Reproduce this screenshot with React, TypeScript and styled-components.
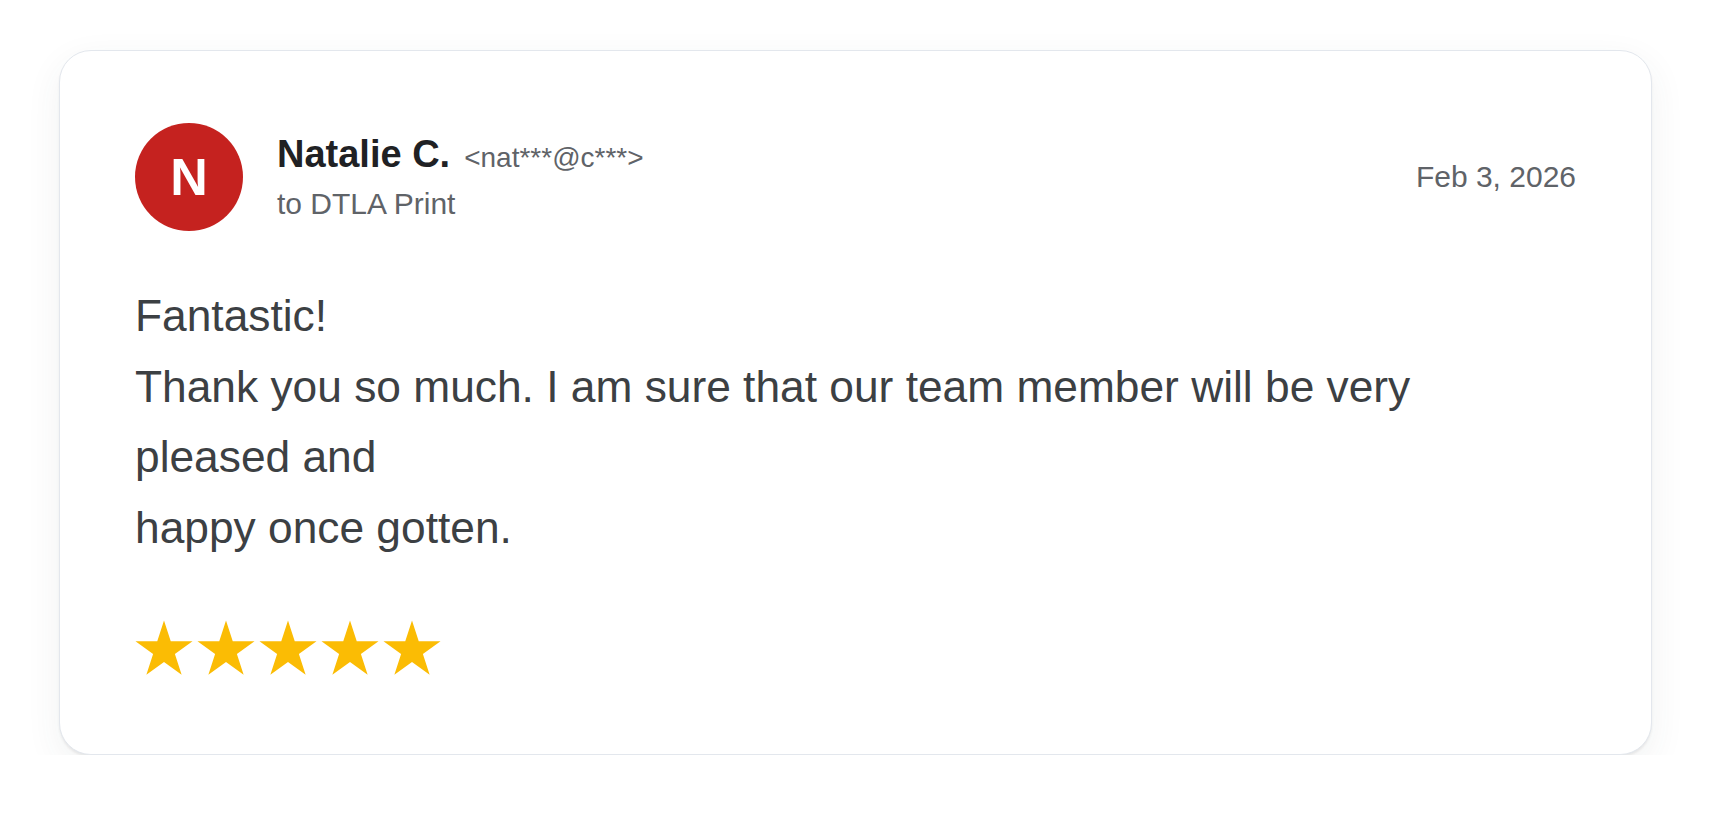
import React from "react";
import styled, { createGlobalStyle } from "styled-components";

const GlobalStyle = createGlobalStyle`
  html, body {
    margin: 0;
    padding: 0;
    background: #ffffff;
  }
  body {
    font-family: "Liberation Sans", Arial, Helvetica, sans-serif;
    -webkit-font-smoothing: antialiased;
  }
  * { box-sizing: border-box; }
`;

const Page = styled.div`
  padding: 50px 58px 0 59px;
`;

const Card = styled.article`
  background: #ffffff;
  border: 1px solid #e3e7ed;
  border-radius: 32px;
  padding: 72px 75px 78px 75px;
  box-shadow: 0 2px 2px rgba(60, 64, 67, 0.08), 0 12px 36px rgba(60, 64, 67, 0.07);
`;

const Header = styled.header`
  display: flex;
  align-items: center;
`;

const Avatar = styled.div<{ $bg: string }>`
  flex: none;
  width: 108px;
  height: 108px;
  border-radius: 50%;
  background: ${(p) => p.$bg};
  color: #ffffff;
  display: flex;
  align-items: center;
  justify-content: center;
  font-size: 52px;
  font-weight: 700;
  line-height: 1;
`;

const SenderBlock = styled.div`
  display: flex;
  flex-direction: column;
  margin-left: 34px;
`;

const NameLine = styled.div`
  display: flex;
  align-items: baseline;
  gap: 14px;
  line-height: 48px;
`;

const Name = styled.span`
  font-size: 38px;
  font-weight: 700;
  color: #202124;
`;

const Email = styled.span`
  font-size: 28px;
  color: #5f6368;
`;

const Recipient = styled.div`
  margin-top: 2px;
  font-size: 30px;
  line-height: 40px;
  color: #5f6368;
`;

const DateText = styled.time`
  margin-left: auto;
  font-size: 30px;
  line-height: 40px;
  color: #5f6368;
`;

const Body = styled.div`
  margin-top: 50px;
  font-size: 44.3px;
  line-height: 70.6px;
  color: #3c4043;
`;

const Stars = styled.div`
  display: flex;
  gap: 4px;
  margin-top: 57px;
`;

const StarSvg = styled.svg`
  display: block;
  width: 58px;
  height: 56px;
  fill: #fbbc04;
`;

const Star = () => (
  <StarSvg viewBox="0 0 58 56" aria-hidden="true">
    <polygon points="29,0.5 35.74,21.23 57.53,21.23 39.9,34.04 46.63,54.77 29,41.96 11.37,54.77 18.1,34.04 0.47,21.23 22.26,21.23" />
  </StarSvg>
);

export default function App() {
  return (
    <>
      <GlobalStyle />
      <Page>
        <Card>
          <Header>
            <Avatar $bg="#c5221f">N</Avatar>
            <SenderBlock>
              <NameLine>
                <Name>Natalie C.</Name>
                <Email>&lt;nat***@c***&gt;</Email>
              </NameLine>
              <Recipient>to DTLA Print</Recipient>
            </SenderBlock>
            <DateText>Feb 3, 2026</DateText>
          </Header>
          <Body>
            Fantastic!
            <br />
            Thank you so much. I am sure that our team member will be very
            <br />
            pleased and
            <br />
            happy once gotten.
          </Body>
          <Stars aria-label="5 out of 5 stars">
            {[0, 1, 2, 3, 4].map((i) => (
              <Star key={i} />
            ))}
          </Stars>
        </Card>
      </Page>
    </>
  );
}
